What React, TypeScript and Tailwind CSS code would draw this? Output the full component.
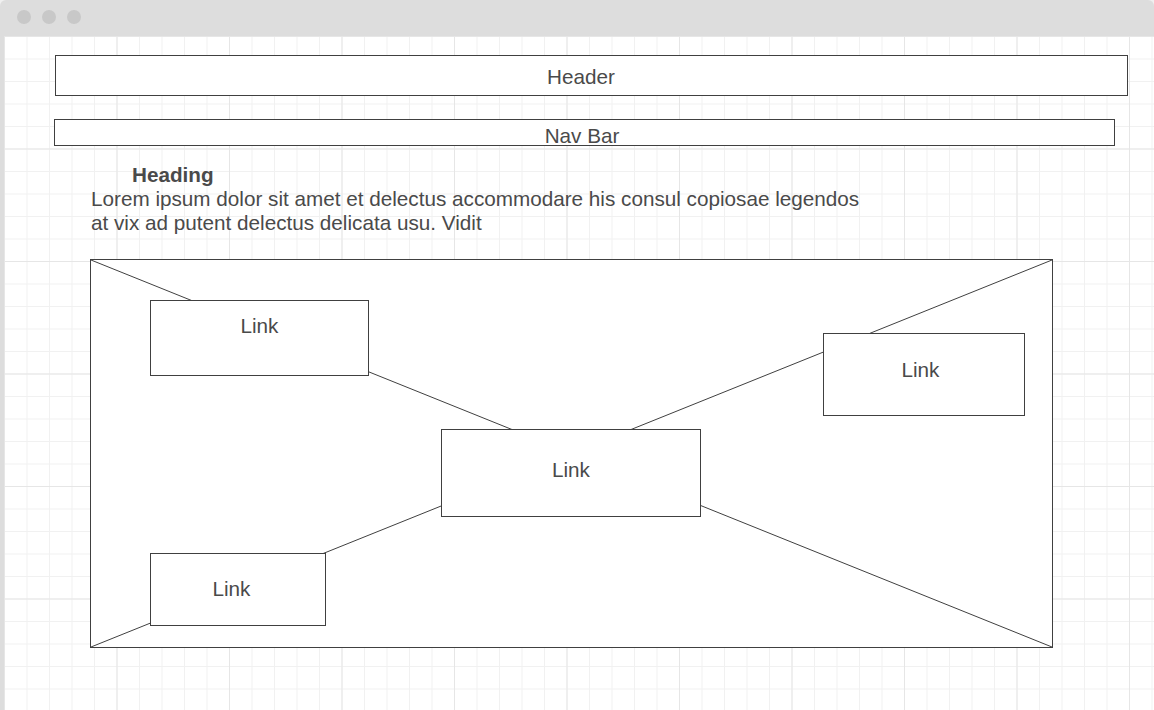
const font = "font-['Liberation_Sans',Arial,sans-serif]";

type LinkNode = { left: string; top: string; size: string; pad: string };

const nodes: LinkNode[] = [
  { left: "left-[59px]", top: "top-[40px]", size: "w-[219px] h-[76px]", pad: "pt-[13px]" },
  { left: "left-[732px]", top: "top-[73px]", size: "w-[202px] h-[83px]", pad: "pt-[24px] pr-[7px]" },
  { left: "left-[350px]", top: "top-[169px]", size: "w-[260px] h-[88px]", pad: "pt-[28px]" },
  { left: "left-[59px]", top: "top-[293px]", size: "w-[176px] h-[73px]", pad: "pt-[23px] pr-[13px]" },
];

export default function App() {
  return (
    <div className={`w-[1154px] h-[710px] overflow-hidden bg-[#f0f0f0] ${font} text-[#4a4a4a]`}>
      <div className="w-full h-full rounded-t-[6px] bg-[#dddddd] flex flex-col">
        {/* Window chrome */}
        <div className="h-[36px] shrink-0 flex items-center gap-[11px] pl-[17px] pb-[2px]">
          <span className="w-[14px] h-[14px] rounded-full bg-[#c8c8c8]" />
          <span className="w-[14px] h-[14px] rounded-full bg-[#c8c8c8]" />
          <span className="w-[14px] h-[14px] rounded-full bg-[#c8c8c8]" />
        </div>

        {/* Canvas with grid */}
        <div className="ml-[4px] flex-1 bg-white bg-[image:linear-gradient(to_right,#e6e6e6_1px,transparent_1px),linear-gradient(to_bottom,#e6e6e6_1px,transparent_1px),linear-gradient(to_right,#f1f1f1_1px,transparent_1px),linear-gradient(to_bottom,#f1f1f1_1px,transparent_1px)] bg-[size:112.5px_112.5px,112.5px_112.5px,22.5px_22.5px,22.5px_22.5px] flex flex-col text-[20.7px]">
          {/* Header */}
          <div className="ml-[51px] mt-[19px] w-[1073px] h-[41px] border border-[#404040] bg-white flex items-center justify-center pr-[21px] pt-[2px]">
            Header
          </div>

          {/* Nav bar */}
          <div className="ml-[50px] mt-[23px] w-[1061px] h-[27px] border border-[#404040] bg-white overflow-hidden text-center leading-[24px] pt-[4px] pr-[5px]">
            Nav Bar
          </div>

          {/* Text block */}
          <div className="ml-[87px] mt-[17px] leading-[24px]">
            <div className="ml-[41px] font-bold">Heading</div>
            <p className="w-[820px]">
              Lorem ipsum dolor sit amet et delectus accommodare his consul copiosae legendos
              <br />
              at vix ad putent delectus delicata usu. Vidit
            </p>
          </div>

          {/* Image placeholder with link nodes */}
          <div className="relative ml-[86px] mt-[24px] w-[963px] h-[389px] border border-[#404040] bg-white">
            <svg className="w-full h-full block" viewBox="0 0 961 387" preserveAspectRatio="none">
              <line x1="0" y1="0" x2="961" y2="387" stroke="#404040" strokeWidth="1" />
              <line x1="961" y1="0" x2="0" y2="387" stroke="#404040" strokeWidth="1" />
            </svg>
            {nodes.map((n, i) => (
              <div
                key={i}
                className={`absolute ${n.left} ${n.top} ${n.size} ${n.pad} border border-[#404040] bg-white text-center leading-[24px]`}
              >
                Link
              </div>
            ))}
          </div>
        </div>
      </div>
    </div>
  );
}
